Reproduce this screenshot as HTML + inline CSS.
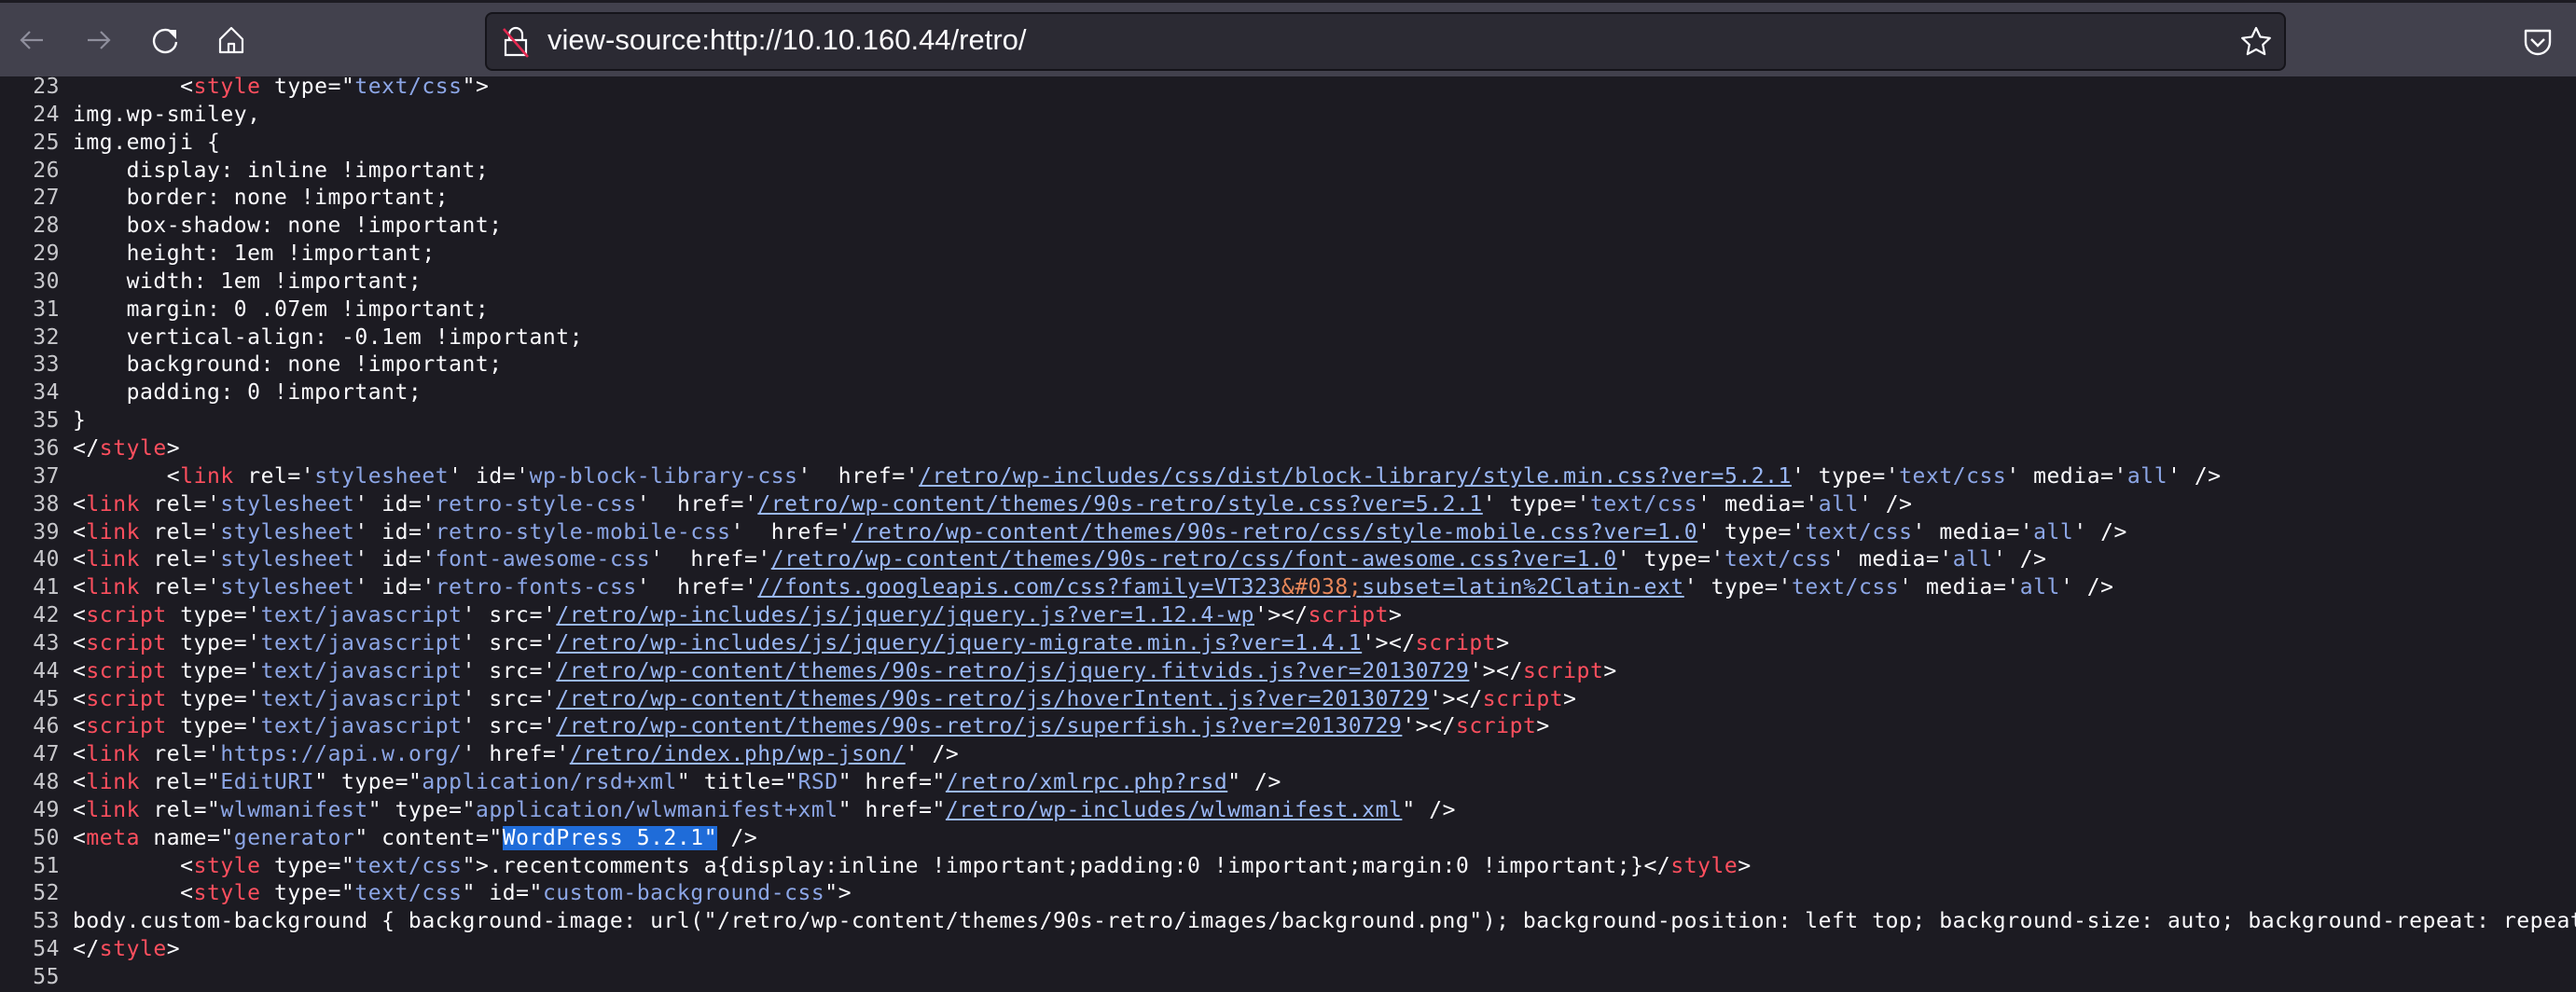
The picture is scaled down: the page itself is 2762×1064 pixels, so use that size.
<!DOCTYPE html>
<html><head><meta charset="utf-8">
<style>
html,body{margin:0;padding:0;width:2762px;height:1061px;overflow:hidden;background:#1c1b22;}
#bar{position:absolute;left:0;top:0;width:2762px;height:82px;background:#42414d;border-top:3px solid #1c1b22;box-sizing:border-box;z-index:2;}
#url{position:absolute;left:520px;top:10px;width:1931px;height:63px;background:#2b2a33;border:2px solid #15141a;border-radius:8px;box-sizing:border-box;}
#urltext{position:absolute;left:65px;top:10px;font:31px "Liberation Sans",sans-serif;color:#fbfbfe;white-space:nowrap;}
svg{position:absolute;}
#code{position:absolute;left:0;top:79px;width:2762px;overflow:hidden;font-family:"DejaVu Sans Mono","Liberation Mono",monospace;font-size:23px;letter-spacing:0.55px;line-height:29.85px;color:#fbfbfe;white-space:pre;z-index:1;}
.n{display:inline-block;width:64px;text-align:right;color:#c8c8cc;margin-right:14px;}
.t{color:#ff4f5e;}
.a{color:#fbfbfe;}
.v{color:#8ca6e6;}
.l{color:#9ab8f6;text-decoration:underline;}
.e{color:#e8875a;}
.s{background:#1f6cd9;color:#fff;}
</style></head><body>
<div id="bar">
<svg width="40" height="40" style="left:14px;top:20px" viewBox="0 0 40 40"><path d="M32 20H9M18 11l-9 9 9 9" stroke="#8f8f9d" stroke-width="2.2" fill="none"/></svg>
<svg width="40" height="40" style="left:86px;top:20px" viewBox="0 0 40 40"><path d="M8 20h23M22 11l9 9-9 9" stroke="#8f8f9d" stroke-width="2.2" fill="none"/></svg>
<svg width="40" height="40" style="left:157px;top:20px" viewBox="0 0 40 40"><path d="M29 13A12 12 0 1 0 32 22" stroke="#fbfbfe" stroke-width="2.4" fill="none"/><path d="M22 9h10v10z" fill="#fbfbfe"/></svg>
<svg width="40" height="40" style="left:228px;top:20px" viewBox="0 0 40 40"><path d="M8 19L20 7l12 12v14H8z M17 33v-9h6v9" stroke="#fbfbfe" stroke-width="2.2" fill="none" stroke-linejoin="round"/></svg>
<div id="url">
<svg width="34" height="40" style="left:14px;top:10px" viewBox="0 0 34 40"><path d="M10 18v-6a7 7 0 0 1 14 0v6M6 18h22v16H6z" stroke="#fbfbfe" stroke-width="2.2" fill="none"/><path d="M4 6l26 30" stroke="#e22850" stroke-width="2.6"/></svg>
<div id="urltext">view-source:http://10.10.160.44/retro/</div>
<svg width="40" height="40" style="left:1877px;top:10px" viewBox="0 0 40 40"><path d="M20 5l4.5 9.5 10.3 1.3-7.6 7.1 2 10.2L20 28l-9.2 5.1 2-10.2-7.6-7.1 10.3-1.3z" stroke="#fbfbfe" stroke-width="2.2" fill="none" stroke-linejoin="round"/></svg>
</div>
<svg width="40" height="40" style="left:2701px;top:22px" viewBox="0 0 40 40"><path d="M7 8h26v12a13 13 0 0 1-26 0z" stroke="#fbfbfe" stroke-width="2.4" fill="none" stroke-linejoin="round"/><path d="M13 17l7 7 7-7" stroke="#fbfbfe" stroke-width="2.4" fill="none"/></svg>
</div>
<div id="code"><span class="n">23</span>        &lt;<span class="t">style</span> <span class="a">type</span>="<span class="v">text/css</span>"&gt;
<span class="n">24</span>img.wp-smiley,
<span class="n">25</span>img.emoji {
<span class="n">26</span>    display: inline !important;
<span class="n">27</span>    border: none !important;
<span class="n">28</span>    box-shadow: none !important;
<span class="n">29</span>    height: 1em !important;
<span class="n">30</span>    width: 1em !important;
<span class="n">31</span>    margin: 0 .07em !important;
<span class="n">32</span>    vertical-align: -0.1em !important;
<span class="n">33</span>    background: none !important;
<span class="n">34</span>    padding: 0 !important;
<span class="n">35</span>}
<span class="n">36</span>&lt;/<span class="t">style</span>&gt;
<span class="n">37</span>       &lt;<span class="t">link</span> <span class="a">rel</span>='<span class="v">stylesheet</span>' <span class="a">id</span>='<span class="v">wp-block-library-css</span>'  <span class="a">href</span>='<span class="l">/retro/wp-includes/css/dist/block-library/style.min.css?ver=5.2.1</span>' <span class="a">type</span>='<span class="v">text/css</span>' <span class="a">media</span>='<span class="v">all</span>' /&gt;
<span class="n">38</span>&lt;<span class="t">link</span> <span class="a">rel</span>='<span class="v">stylesheet</span>' <span class="a">id</span>='<span class="v">retro-style-css</span>'  <span class="a">href</span>='<span class="l">/retro/wp-content/themes/90s-retro/style.css?ver=5.2.1</span>' <span class="a">type</span>='<span class="v">text/css</span>' <span class="a">media</span>='<span class="v">all</span>' /&gt;
<span class="n">39</span>&lt;<span class="t">link</span> <span class="a">rel</span>='<span class="v">stylesheet</span>' <span class="a">id</span>='<span class="v">retro-style-mobile-css</span>'  <span class="a">href</span>='<span class="l">/retro/wp-content/themes/90s-retro/css/style-mobile.css?ver=1.0</span>' <span class="a">type</span>='<span class="v">text/css</span>' <span class="a">media</span>='<span class="v">all</span>' /&gt;
<span class="n">40</span>&lt;<span class="t">link</span> <span class="a">rel</span>='<span class="v">stylesheet</span>' <span class="a">id</span>='<span class="v">font-awesome-css</span>'  <span class="a">href</span>='<span class="l">/retro/wp-content/themes/90s-retro/css/font-awesome.css?ver=1.0</span>' <span class="a">type</span>='<span class="v">text/css</span>' <span class="a">media</span>='<span class="v">all</span>' /&gt;
<span class="n">41</span>&lt;<span class="t">link</span> <span class="a">rel</span>='<span class="v">stylesheet</span>' <span class="a">id</span>='<span class="v">retro-fonts-css</span>'  <span class="a">href</span>='<span class="l">//fonts.googleapis.com/css?family=VT323<span class="e">&amp;#038;</span>subset=latin%2Clatin-ext</span>' <span class="a">type</span>='<span class="v">text/css</span>' <span class="a">media</span>='<span class="v">all</span>' /&gt;
<span class="n">42</span>&lt;<span class="t">script</span> <span class="a">type</span>='<span class="v">text/javascript</span>' <span class="a">src</span>='<span class="l">/retro/wp-includes/js/jquery/jquery.js?ver=1.12.4-wp</span>'&gt;&lt;/<span class="t">script</span>&gt;
<span class="n">43</span>&lt;<span class="t">script</span> <span class="a">type</span>='<span class="v">text/javascript</span>' <span class="a">src</span>='<span class="l">/retro/wp-includes/js/jquery/jquery-migrate.min.js?ver=1.4.1</span>'&gt;&lt;/<span class="t">script</span>&gt;
<span class="n">44</span>&lt;<span class="t">script</span> <span class="a">type</span>='<span class="v">text/javascript</span>' <span class="a">src</span>='<span class="l">/retro/wp-content/themes/90s-retro/js/jquery.fitvids.js?ver=20130729</span>'&gt;&lt;/<span class="t">script</span>&gt;
<span class="n">45</span>&lt;<span class="t">script</span> <span class="a">type</span>='<span class="v">text/javascript</span>' <span class="a">src</span>='<span class="l">/retro/wp-content/themes/90s-retro/js/hoverIntent.js?ver=20130729</span>'&gt;&lt;/<span class="t">script</span>&gt;
<span class="n">46</span>&lt;<span class="t">script</span> <span class="a">type</span>='<span class="v">text/javascript</span>' <span class="a">src</span>='<span class="l">/retro/wp-content/themes/90s-retro/js/superfish.js?ver=20130729</span>'&gt;&lt;/<span class="t">script</span>&gt;
<span class="n">47</span>&lt;<span class="t">link</span> <span class="a">rel</span>='<span class="v">https://api.w.org/</span>' <span class="a">href</span>='<span class="l">/retro/index.php/wp-json/</span>' /&gt;
<span class="n">48</span>&lt;<span class="t">link</span> <span class="a">rel</span>="<span class="v">EditURI</span>" <span class="a">type</span>="<span class="v">application/rsd+xml</span>" <span class="a">title</span>="<span class="v">RSD</span>" <span class="a">href</span>="<span class="l">/retro/xmlrpc.php?rsd</span>" /&gt;
<span class="n">49</span>&lt;<span class="t">link</span> <span class="a">rel</span>="<span class="v">wlwmanifest</span>" <span class="a">type</span>="<span class="v">application/wlwmanifest+xml</span>" <span class="a">href</span>="<span class="l">/retro/wp-includes/wlwmanifest.xml</span>" /&gt;
<span class="n">50</span>&lt;<span class="t">meta</span> <span class="a">name</span>="<span class="v">generator</span>" <span class="a">content</span>="<span class="s">WordPress 5.2.1"</span> /&gt;
<span class="n">51</span>        &lt;<span class="t">style</span> <span class="a">type</span>="<span class="v">text/css</span>"&gt;.recentcomments a{display:inline !important;padding:0 !important;margin:0 !important;}&lt;/<span class="t">style</span>&gt;
<span class="n">52</span>        &lt;<span class="t">style</span> <span class="a">type</span>="<span class="v">text/css</span>" <span class="a">id</span>="<span class="v">custom-background-css</span>"&gt;
<span class="n">53</span>body.custom-background { background-image: url("/retro/wp-content/themes/90s-retro/images/background.png"); background-position: left top; background-size: auto; background-repeat: repeat
<span class="n">54</span>&lt;/<span class="t">style</span>&gt;
<span class="n">55</span></div>
</body></html>
